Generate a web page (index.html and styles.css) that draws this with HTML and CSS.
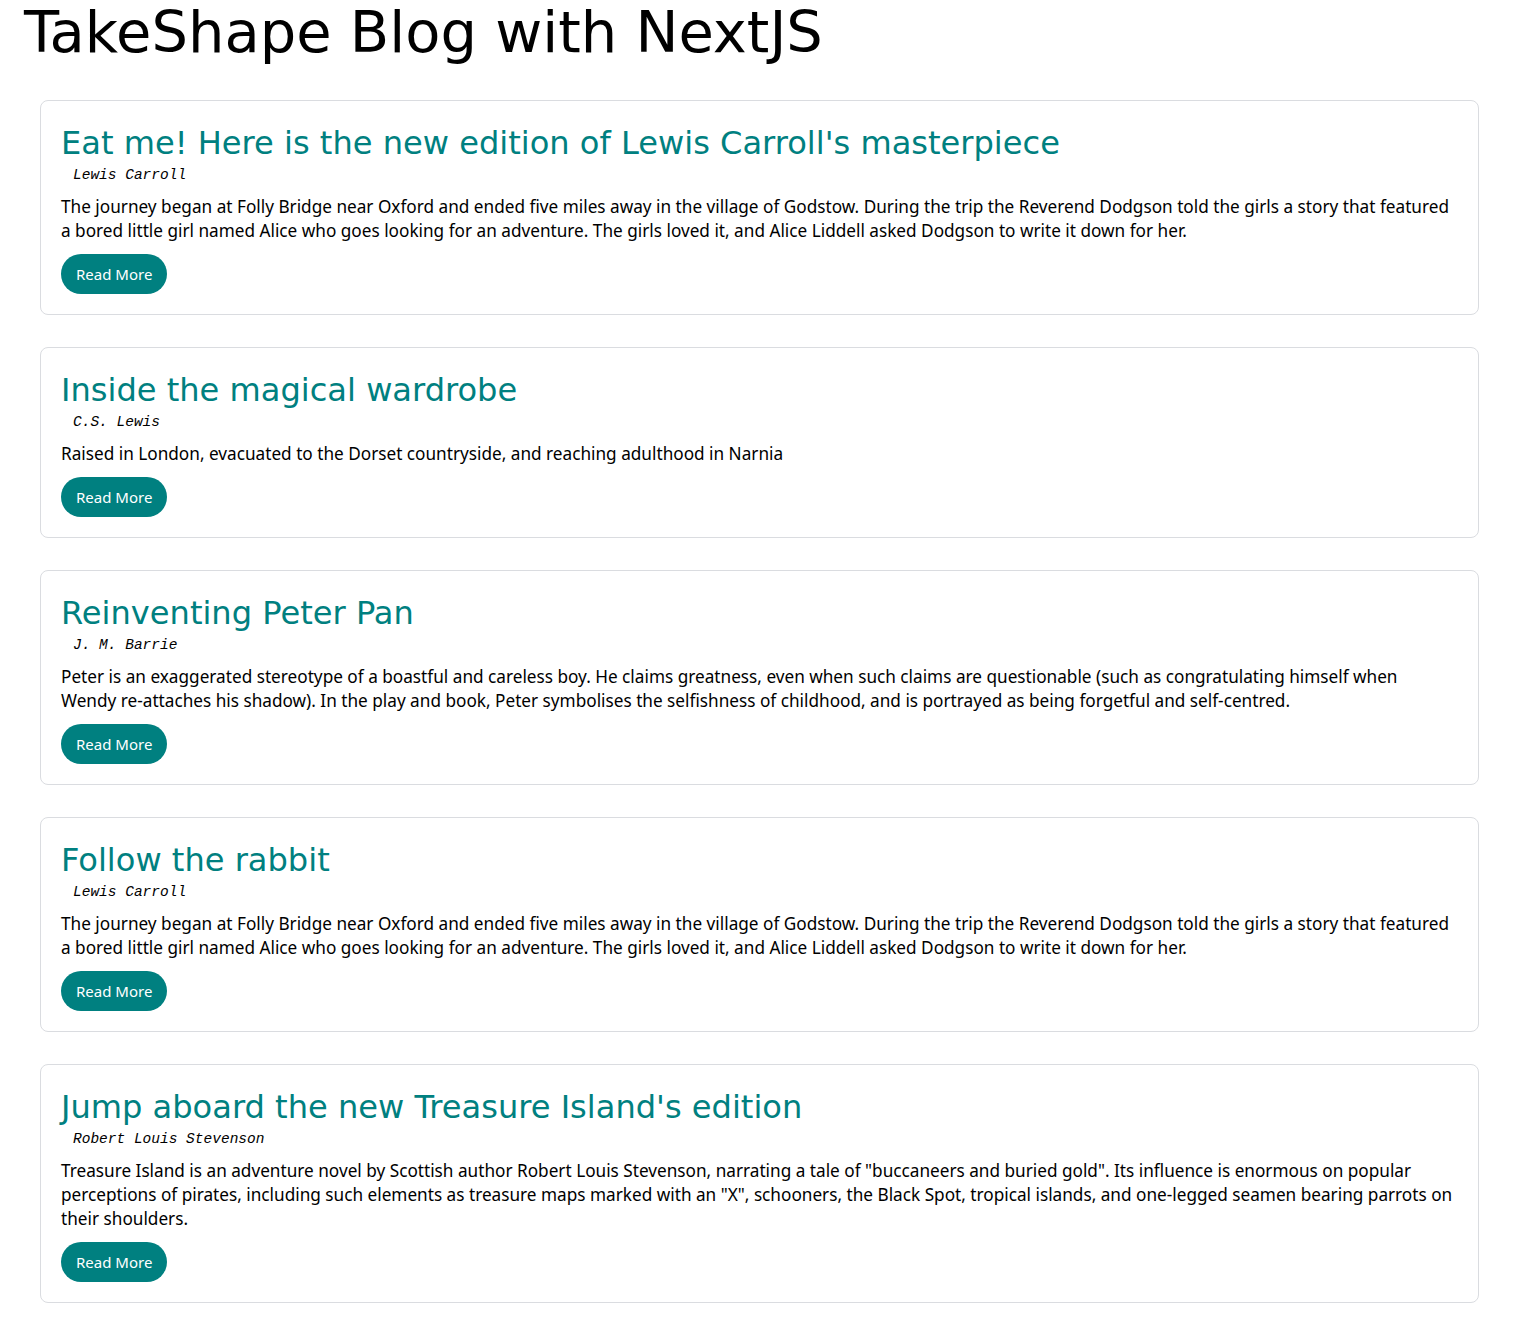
FILE: index.html
```html
<!DOCTYPE html>
<html lang="en">
<head>
  <meta charset="UTF-8">
  <meta name="viewport" content="width=device-width, initial-scale=1.0">
  <title>TakeShape Blog with NextJS</title>
  <link rel="stylesheet" href="styles.css">
</head>
<body>
  <h1 class="site-title">TakeShape Blog with NextJS</h1>

  <!-- Lista de posts -->
  <main class="post-list">
    <article class="post-card">
      <h2 class="post-title">Eat me! Here is the new edition of Lewis Carroll's masterpiece</h2>
      <p class="post-author">Lewis Carroll</p>
      <p class="post-summary">The journey began at Folly Bridge near Oxford and ended five miles away in the village of Godstow. During the trip the Reverend Dodgson told the girls a story that featured a bored little girl named Alice who goes looking for an adventure. The girls loved it, and Alice Liddell asked Dodgson to write it down for her.</p>
      <a class="read-more" href="#">Read More</a>
    </article>

    <article class="post-card">
      <h2 class="post-title">Inside the magical wardrobe</h2>
      <p class="post-author">C.S. Lewis</p>
      <p class="post-summary">Raised in London, evacuated to the Dorset countryside, and reaching adulthood in Narnia</p>
      <a class="read-more" href="#">Read More</a>
    </article>

    <article class="post-card">
      <h2 class="post-title">Reinventing Peter Pan</h2>
      <p class="post-author">J. M. Barrie</p>
      <p class="post-summary">Peter is an exaggerated stereotype of a boastful and careless boy. He claims greatness, even when such claims are questionable (such as congratulating himself when Wendy re-attaches his shadow). In the play and book, Peter symbolises the selfishness of childhood, and is portrayed as being forgetful and self-centred.</p>
      <a class="read-more" href="#">Read More</a>
    </article>

    <article class="post-card">
      <h2 class="post-title">Follow the rabbit</h2>
      <p class="post-author">Lewis Carroll</p>
      <p class="post-summary">The journey began at Folly Bridge near Oxford and ended five miles away in the village of Godstow. During the trip the Reverend Dodgson told the girls a story that featured a bored little girl named Alice who goes looking for an adventure. The girls loved it, and Alice Liddell asked Dodgson to write it down for her.</p>
      <a class="read-more" href="#">Read More</a>
    </article>

    <article class="post-card">
      <h2 class="post-title">Jump aboard the new Treasure Island's edition</h2>
      <p class="post-author">Robert Louis Stevenson</p>
      <p class="post-summary">Treasure Island is an adventure novel by Scottish author Robert Louis Stevenson, narrating a tale of "buccaneers and buried gold". Its influence is enormous on popular perceptions of pirates, including such elements as treasure maps marked with an "X", schooners, the Black Spot, tropical islands, and one-legged seamen bearing parrots on their shoulders.</p>
      <a class="read-more" href="#">Read More</a>
    </article>
  </main>
</body>
</html>
```

FILE: styles.css
```css
body {
  margin: 0;
  font-family: "Noto Sans", "Open Sans", sans-serif;
  color: #000;
  background: #fff;
}
.site-title {
  margin: 0 0 35px 24px;
  font-family: "DejaVu Sans", Verdana, sans-serif;
  font-weight: normal;
  font-size: 57.5px;
  line-height: 65px;
}
.post-list {
  display: flex;
  flex-direction: column;
  gap: 32px;
  margin: 0 40px 17px;
}
.post-card {
  border: 1px solid #dadce0;
  border-radius: 8px;
  padding: 20px;
}
.post-title {
  margin: 0;
  font-family: "DejaVu Sans", Verdana, sans-serif;
  font-weight: normal;
  font-size: 32.1px;
  line-height: 44px;
  color: #008080;
}
.post-author {
  margin: 1px 0 11px 12px;
  font-family: "Liberation Mono", "Courier New", monospace;
  font-style: italic;
  font-size: 14.5px;
  line-height: 18px;
}
.post-summary {
  max-width: 1394px;
  margin: 0 0 11px;
  font-size: 17.2px;
  line-height: 24px;
}
.read-more {
  display: inline-block;
  height: 40px;
  padding: 0 15px;
  border-radius: 20px;
  background-color: #008080;
  color: #fff;
  font-size: 15px;
  line-height: 40px;
  text-decoration: none;
}
```
